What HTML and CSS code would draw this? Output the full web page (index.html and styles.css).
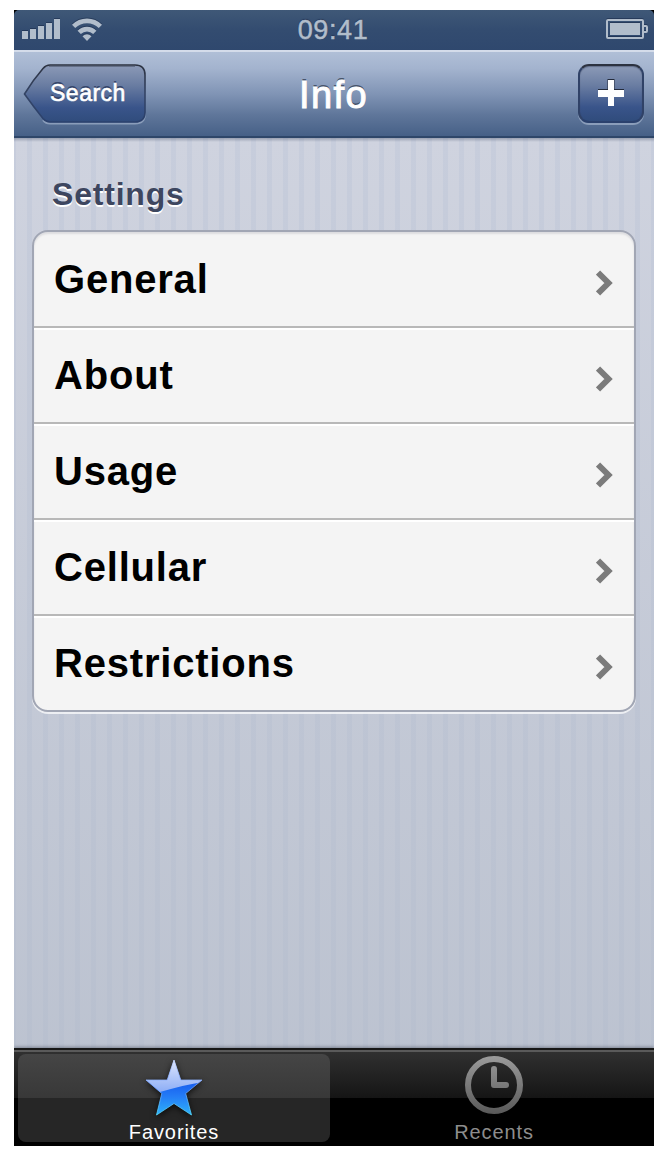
FILE: index.html
```
<!DOCTYPE html>
<html lang="en">
<head>
<meta charset="utf-8">
<title>Info</title>
<link rel="stylesheet" href="styles.css">
</head>
<body>
<div class="phone">
  <header class="status">
    <div class="status-left">
      <svg width="38" height="22" viewBox="0 0 38 22" fill="#b1bdcb"><path d="M0 13h6v8H0zM8 11h6v10H8zM16 8h6v13h-6zM24 5h6v16h-6zM32 1h6v20h-6z"/></svg>
      <svg class="wifi" width="30" height="24" viewBox="0 0 30 24"><g fill="none" stroke="#b1bdcb" stroke-width="4.600"><path d="M1.600 9.400a19 19 0 0 1 26.800 0"/><path d="M7.200 15.400a11 11 0 0 1 15.600 0"/></g><path fill="#b1bdcb" d="M10.500 19.200a6 6 0 0 1 9 0L15 24z"/></svg>
    </div>
    <time class="clock">09:41</time>
    <svg class="battery" width="42" height="20" viewBox="0 0 42 20"><path fill="none" stroke="#b1bdcb" stroke-width="2" d="M2 1h34q1 0 1 1v16q0 1-1 1H2q-1 0-1-1V2q0-1 1-1zM38 7h2q1 0 1 1v4q0 1-1 1h-2"/><path fill="#b1bdcb" d="M4 4h30v12H4z"/></svg>
  </header>
  <nav class="nav">
    <a class="back">
      <svg class="back-shape" width="124" height="61" viewBox="0 0 124 61">
        <defs>
          <linearGradient id="btn" x1="0" y1="0" x2="0" y2="1"><stop offset="0" stop-color="#8c9ab7"/><stop offset=".35" stop-color="#6a7da2"/><stop offset=".75" stop-color="#39548a"/><stop offset="1" stop-color="#304c7c"/></linearGradient>
          <linearGradient id="edge" x1="0" y1="0" x2="0" y2="1"><stop offset="0" stop-color="#2c3240"/><stop offset=".5" stop-color="#344465"/><stop offset="1" stop-color="#2b416d"/></linearGradient>
        </defs>
        <path d="M20 56q3 3.500 7 3.500h85q10 0 10-10" fill="none" stroke="#8a9dba" stroke-width="2"/>
        <path d="M27 1h85q10 0 10 10v37q0 10-10 10H27q-4 0-7-3.500Q10 42 1.500 30 10 16 20 4.500 23 1 27 1z" fill="url(#btn)" stroke="url(#edge)" stroke-width="1.600"/>
        <path d="M26 2.500h86" stroke="#4d566b" opacity=".6"/>
      </svg>
      <span class="back-label">Search</span>
    </a>
    <h1 class="title">Info</h1>
    <button class="add" aria-label="Add">
      <svg width="28" height="29" viewBox="0 0 28 29"><path fill="#242b3b" d="M10.500 0h7v10h9.500v7H1v-7h9.500z"/><path fill="#fff" d="M11 1h6v10h10v7H17v9h-6v-9H1v-7h10z"/></svg>
    </button>
  </nav>
  <main class="content">
    <h2 class="section">Settings</h2>
    <ul class="list">
      <li class="row"><span>General</span><svg class="chev" viewBox="0 0 18 26"><path d="M2 2.500L12.500 13 2 23.500"/></svg></li>
      <li class="row"><span>About</span><svg class="chev" viewBox="0 0 18 26"><path d="M2 2.500L12.500 13 2 23.500"/></svg></li>
      <li class="row"><span>Usage</span><svg class="chev" viewBox="0 0 18 26"><path d="M2 2.500L12.500 13 2 23.500"/></svg></li>
      <li class="row"><span>Cellular</span><svg class="chev" viewBox="0 0 18 26"><path d="M2 2.500L12.500 13 2 23.500"/></svg></li>
      <li class="row"><span>Restrictions</span><svg class="chev" viewBox="0 0 18 26"><path d="M2 2.500L12.500 13 2 23.500"/></svg></li>
    </ul>
  </main>
  <footer class="tabs">
    <a class="tab active">
      <svg class="star" width="58" height="58" viewBox="0 0 58 58">
        <defs>
          <linearGradient id="deep" x1="0" y1="0" x2="0" y2="1"><stop offset=".4" stop-color="#175cee"/><stop offset=".65" stop-color="#247df6"/><stop offset="1" stop-color="#2fb8fa"/></linearGradient>
          <linearGradient id="gloss" x1="0" y1="0" x2="0" y2="1"><stop offset="0" stop-color="#e0e7fd"/><stop offset="1" stop-color="#85a8f5"/></linearGradient>
          <linearGradient id="rim" x1="0" y1="0" x2="0" y2="1"><stop offset="0" stop-color="#d4e0ff"/><stop offset=".5" stop-color="#6f9bf7"/><stop offset="1" stop-color="#54dcff"/></linearGradient>
          <clipPath id="starclip"><path d="M29 1l6.800 20H57L40.700 34.500 46.500 56 29 44.500 11.500 56l5.300-21.500L1 21h21.200z"/></clipPath>
        </defs>
        <g clip-path="url(#starclip)"><path fill="url(#deep)" d="M0 0h58v58H0z"/><path fill="url(#gloss)" d="M0 0h58v23Q42 25 15 33L0 36z"/></g>
        <path d="M29 1l6.800 20H57L40.700 34.500 46.500 56 29 44.500 11.500 56l5.300-21.500L1 21h21.200z" fill="none" stroke="url(#rim)" stroke-width=".8"/>
      </svg>
      <span>Favorites</span>
    </a>
    <a class="tab">
      <svg class="recent" width="58" height="58" viewBox="0 0 58 58">
        <defs><linearGradient id="grey" gradientUnits="userSpaceOnUse" x1="0" y1="0" x2="0" y2="58"><stop offset="0" stop-color="#9b9b9b"/><stop offset="1" stop-color="#595959"/></linearGradient></defs>
        <circle cx="29" cy="29" r="26" fill="none" stroke="url(#grey)" stroke-width="6"/>
        <path d="M29 13v16h12" fill="none" stroke="url(#grey)" stroke-width="6" stroke-linecap="round" stroke-linejoin="round"/>
      </svg>
      <span>Recents</span>
    </a>
  </footer>
</div>
</body>
</html>
```

FILE: styles.css
```
* { box-sizing: border-box; }
body {
  margin: 0;
  padding: 10px 10px 10px 14px;
  background: #fff;
  font-family: "Liberation Sans", Arial, sans-serif;
}
svg { display: block; flex: none; }
.phone {
  width: 640px;
  height: 1136px;
  display: flex;
  flex-direction: column;
  overflow: hidden;
  background: #000;
}
.status {
  height: 40px;
  flex: none;
  display: grid;
  grid-template-columns: 1fr auto 1fr;
  padding: 0 6px 0 8px;
  border-radius: 5px 5px 0 0;
  background: linear-gradient(#3f5877, #334c70 50%, #2f486e);
}
.status svg { filter: drop-shadow(0 -1px 0 rgba(20, 35, 65, .5)); }
.status-left { display: flex; gap: 12px; padding-top: 8px; }
.wifi { margin-top: -1px; }
.clock {
  margin-left: -4px;
  color: #b1bdcb;
  font-size: 27px;
  line-height: 40px;
  letter-spacing: .6px;
  -webkit-text-stroke: .5px #b1bdcb;
  text-shadow: 0 -1px 1px #243655;
}
.battery { justify-self: end; margin-top: 9px; }
.nav {
  height: 88px;
  flex: none;
  display: grid;
  grid-template-columns: 1fr auto 1fr;
  align-items: start;
  padding: 12px 10px 0 9px;
  border-top: 2px solid #d4dcea;
  border-bottom: 2px solid #2e4669;
  background: linear-gradient(#b0bfd7, #a3b3ce 20%, #8094b5 50%, #5f769a 75%, #466087);
}
.back { display: grid; width: 124px; }
.back-shape, .back-label { grid-area: 1 / 1; }
.back-label {
  padding-left: 27px;
  color: #fff;
  font-size: 23px;
  line-height: 59px;
  letter-spacing: .5px;
  -webkit-text-stroke: .6px #fff;
  text-shadow: 0 -2px 0 #34456a;
}
.title {
  margin: 0;
  color: #fff;
  font-size: 38px;
  font-weight: 400;
  line-height: 62px;
  letter-spacing: 1.4px;
  -webkit-text-stroke: 1px #fff;
  text-shadow: 0 -2px 0 #46546b;
}
.add {
  justify-self: end;
  width: 66px;
  height: 59px;
  padding: 0;
  display: grid;
  place-items: center;
  border: 2px solid #304267;
  border-top-color: #2c3240;
  border-bottom-color: #2b416d;
  border-radius: 11px;
  background: linear-gradient(#8c9ab7, #6a7da2 35%, #39548a 75%, #304c7c);
  box-shadow: 0 2px 0 #8a9dba, inset 0 1px 1px rgba(60, 70, 95, .5);
}
.content {
  flex: none;
  height: 910px;
  padding: 37px 18px 0;
  background:
    linear-gradient(rgba(90, 100, 125, .45), rgba(90, 100, 125, 0)) 0 0 / 100% 4px no-repeat,
    linear-gradient(rgba(171, 180, 195, 0), rgba(171, 180, 195, .52)),
    repeating-linear-gradient(90deg, #c7cddc 0 5px, #cfd3df 5px 16px) 13px 0 / 640px 100%;
}
.section {
  margin: 0 0 17px;
  padding-left: 20px;
  color: #3d465f;
  font-size: 32px;
  line-height: 38px;
  letter-spacing: .8px;
  text-shadow: 0 2px 0 #fff;
}
.list {
  margin: 0;
  padding: 0;
  list-style: none;
  border: 2px solid #a1a6b4;
  border-radius: 16px;
  background: #f4f4f4;
  box-shadow: 0 2px 0 rgba(255, 255, 255, .7), inset 0 2px 2px #dcdcdf;
}
.row {
  height: 96px;
  display: flex;
  align-items: center;
  justify-content: space-between;
  padding: 0 20px;
  font-size: 40px;
  font-weight: 700;
  line-height: 94px;
  letter-spacing: .8px;
  border-bottom: 2px solid #b8b8b8;
}
.row + .row { box-shadow: inset 0 2px 0 #fff; }
.row:last-child { height: 94px; border-bottom: 0; }
.chev { width: 18px; height: 26px; margin-top: 7px; }
.chev path { fill: none; stroke: #7b7b7b; stroke-width: 6; }
.tabs {
  height: 98px;
  flex: none;
  display: grid;
  grid-template-columns: 312px 328px;
  grid-template-rows: 90px;
  padding: 2px 0 4px 4px;
  border-top: 2px solid #171717;
  box-shadow: 0 -1px 3px rgba(60, 65, 80, .5);
  background: linear-gradient(#5a5a5a 0 2px, #303030 2px, #151515 48px, #000 48px);
}
.tab {
  padding: 4px 0 0;
  display: flex;
  flex-direction: column;
  align-items: center;
  color: #8d8d8d;
  font-size: 20px;
  line-height: 24px;
  letter-spacing: .9px;
}
.active {
  margin-top: 2px;
  padding-top: 5px;
  border-radius: 8px;
  color: #fff;
  background: linear-gradient(#454545, #383838 44px, #262626 44px);
}
.star { margin-bottom: 3px; filter: drop-shadow(0 2px 3px rgba(0, 0, 0, .7)); }
.recent { margin-bottom: 6px; }
```
